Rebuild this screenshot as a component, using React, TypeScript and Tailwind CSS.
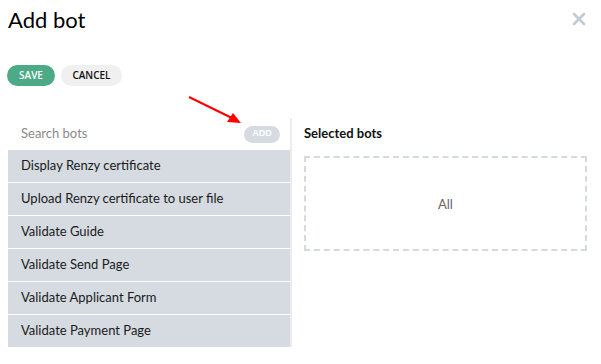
import { X } from "lucide-react";

const bots = [
  "Display Renzy certificate",
  "Upload Renzy certificate to user file",
  "Validate Guide",
  "Validate Send Page",
  "Validate Applicant Form",
  "Validate Payment Page",
];

export default function App() {
  return (
    <div className="relative w-[601px] h-[364px] bg-white overflow-hidden font-['Lato',sans-serif]">
      {/* Header */}
      <div className="flex items-start justify-between pl-2 pr-3 pt-[4px]">
        <h1 className="text-[22px] leading-[32px] text-black font-['Lato',sans-serif]">
          Add bot
        </h1>
        <X className="mt-[5px] size-[20px] text-[#c5cbd3]" strokeWidth={3.2} />
      </div>

      {/* Actions */}
      <div className="flex gap-[6px] pl-[7px] mt-[29px]">
        <button className="h-[21px] w-[48px] rounded-full bg-[#4caa87] text-white text-[10px] font-semibold font-['Open_Sans',sans-serif]">
          SAVE
        </button>
        <button className="h-[21px] w-[61px] rounded-full bg-[#f0f0f0] text-[#111] text-[10px] font-semibold font-['Open_Sans',sans-serif]">
          CANCEL
        </button>
      </div>

      {/* Arrow */}
      <svg className="absolute left-[186px] top-[94px]" width="60" height="34" viewBox="0 0 60 34">
        <line x1="3" y1="3" x2="48" y2="25" stroke="#f00" strokeWidth="2" />
        <polygon points="55,29 41,28 47,19" fill="#f00" />
      </svg>

      {/* Body */}
      <div className="flex mt-[32px] pl-2">
        <div className="w-[284px] border-r-2 border-[#ececec]">
          <div className="flex items-center justify-between h-[32px] pl-[13px] pr-[10px]">
            <span className="text-[13px] text-[#8a8a8a]">Search bots</span>
            <span className="flex items-center justify-center h-[17px] w-[36px] rounded-full bg-[#d5dbe1] text-white text-[9px] font-bold font-['Liberation_Sans',sans-serif]">
              ADD
            </span>
          </div>
          <div className="flex flex-col gap-px">
            {bots.map((bot) => (
              <div
                key={bot}
                className="h-[32px] flex items-center pl-[13px] bg-[#d5dbe1] text-[13px] text-[#1a1a1a]"
              >
                {bot}
              </div>
            ))}
          </div>
        </div>
        <div className="flex-1 pl-3 pr-[14px]">
          <div className="h-[32px] flex items-center text-[13px] font-bold text-[#111]">
            Selected bots
          </div>
          <div className="mt-[6px] h-[95px] border-2 border-dashed border-[#d5dae0] flex items-center justify-center pt-[3px] text-[13px] text-[#666]">
            All
          </div>
        </div>
      </div>
    </div>
  );
}
